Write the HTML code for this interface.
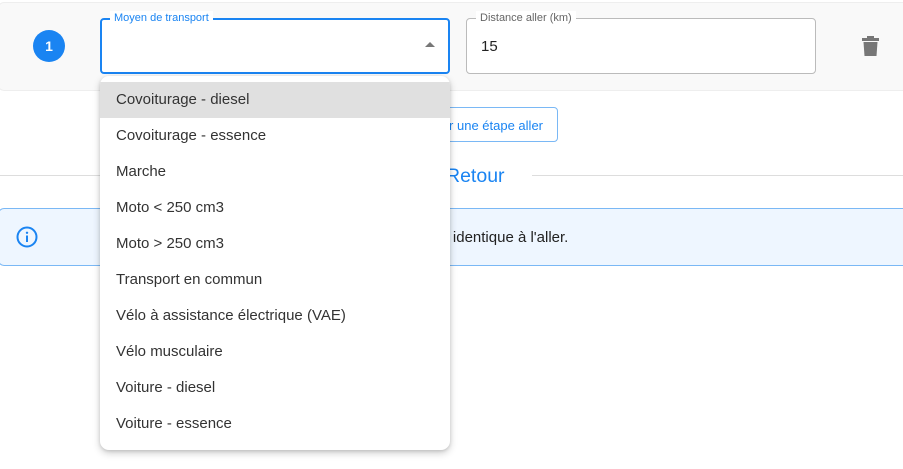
<!DOCTYPE html><html><head><style>
body{margin:0;width:903px;height:469px;background:#fff;font-family:"Liberation Sans",sans-serif;position:relative;overflow:hidden}
.a{position:absolute}
.item{position:absolute;left:0;width:350px;height:36px;line-height:36px;padding-left:16px;box-sizing:border-box;font-size:15px;color:#333}
</style></head><body>
<div class="a" style="left:-2px;top:2px;width:910px;height:87px;background:#f9f9f9;border:1px solid #eee;border-radius:6px"></div>
<div class="a" style="left:33px;top:30px;width:32px;height:32px;border-radius:50%;background:#1a84f2;color:#fff;font-weight:bold;font-size:14px;text-align:center;line-height:32px">1</div>
<div class="a" style="left:100px;top:18px;width:346px;height:52px;border:2px solid #1a84f2;border-radius:4px;background:#fff"></div>
<div class="a" style="left:110px;top:11px;padding:0 4px;background:#fff;font-size:11px;color:#1a84f2;line-height:14px">Moyen de transport</div>
<div class="a" style="left:425px;top:42px;width:0;height:0;border-left:5px solid transparent;border-right:5px solid transparent;border-bottom:5px solid #777"></div>
<div class="a" style="left:466px;top:18px;width:348px;height:54px;border:1px solid #bbb;border-radius:4px;background:#fff"></div>
<div class="a" style="left:476px;top:11px;padding:0 4px;background:#fff;font-size:11px;color:#666;line-height:14px">Distance aller (km)</div>
<div class="a" style="left:481px;top:38px;font-size:15px;color:#222">15</div>
<svg class="a" style="left:862px;top:36px" width="17" height="20" viewBox="0 0 17 20"><rect x="0" y="2" width="17" height="3" fill="#777"/><rect x="5" y="0" width="7" height="3" fill="#777"/><path d="M1.5 6h14l-1 14h-12z" fill="#777"/></svg>
<div class="a" style="left:380px;top:107px;width:178px;height:35px;border:1px solid #7ab8f5;border-radius:4px;background:#fff;color:#1a84f2;font-size:13px;line-height:35px;text-align:right;padding-right:14px;box-sizing:border-box">Ajouter une étape aller</div>
<div class="a" style="left:0;top:175px;width:430px;height:1px;background:#ddd"></div>
<div class="a" style="left:532px;top:175px;width:371px;height:1px;background:#ddd"></div>
<div class="a" style="left:446px;top:165px;font-size:19.5px;color:#1a84f2">Retour</div>
<div class="a" style="left:-2px;top:208px;width:910px;height:56px;background:#eef6ff;border:1px solid #7ab8f5;border-radius:6px"></div>
<svg class="a" style="left:16px;top:226px" width="22" height="22" viewBox="0 0 22 22"><circle cx="11" cy="11" r="9.5" fill="none" stroke="#1a84f2" stroke-width="2"/><rect x="10" y="9.5" width="2" height="6.5" fill="#1a84f2"/><circle cx="11" cy="6.8" r="1.2" fill="#1a84f2"/></svg>
<div class="a" style="left:327px;top:229px;font-size:15px;color:#222">Le trajet retour est identique à l'aller.</div>
<div class="a" style="left:100px;top:76px;width:350px;height:374px;background:#fff;border-radius:9px;box-shadow:0 3px 8px rgba(0,0,0,.2),0 1px 3px rgba(0,0,0,.12);overflow:hidden">
<div class="item" style="top:6px;background:#e0e0e0">Covoiturage - diesel</div>
<div class="item" style="top:42px">Covoiturage - essence</div>
<div class="item" style="top:78px">Marche</div>
<div class="item" style="top:114px">Moto &lt; 250 cm3</div>
<div class="item" style="top:150px">Moto &gt; 250 cm3</div>
<div class="item" style="top:186px">Transport en commun</div>
<div class="item" style="top:222px">Vélo à assistance électrique (VAE)</div>
<div class="item" style="top:258px">Vélo musculaire</div>
<div class="item" style="top:294px">Voiture - diesel</div>
<div class="item" style="top:330px">Voiture - essence</div>
</div>
</body></html>
